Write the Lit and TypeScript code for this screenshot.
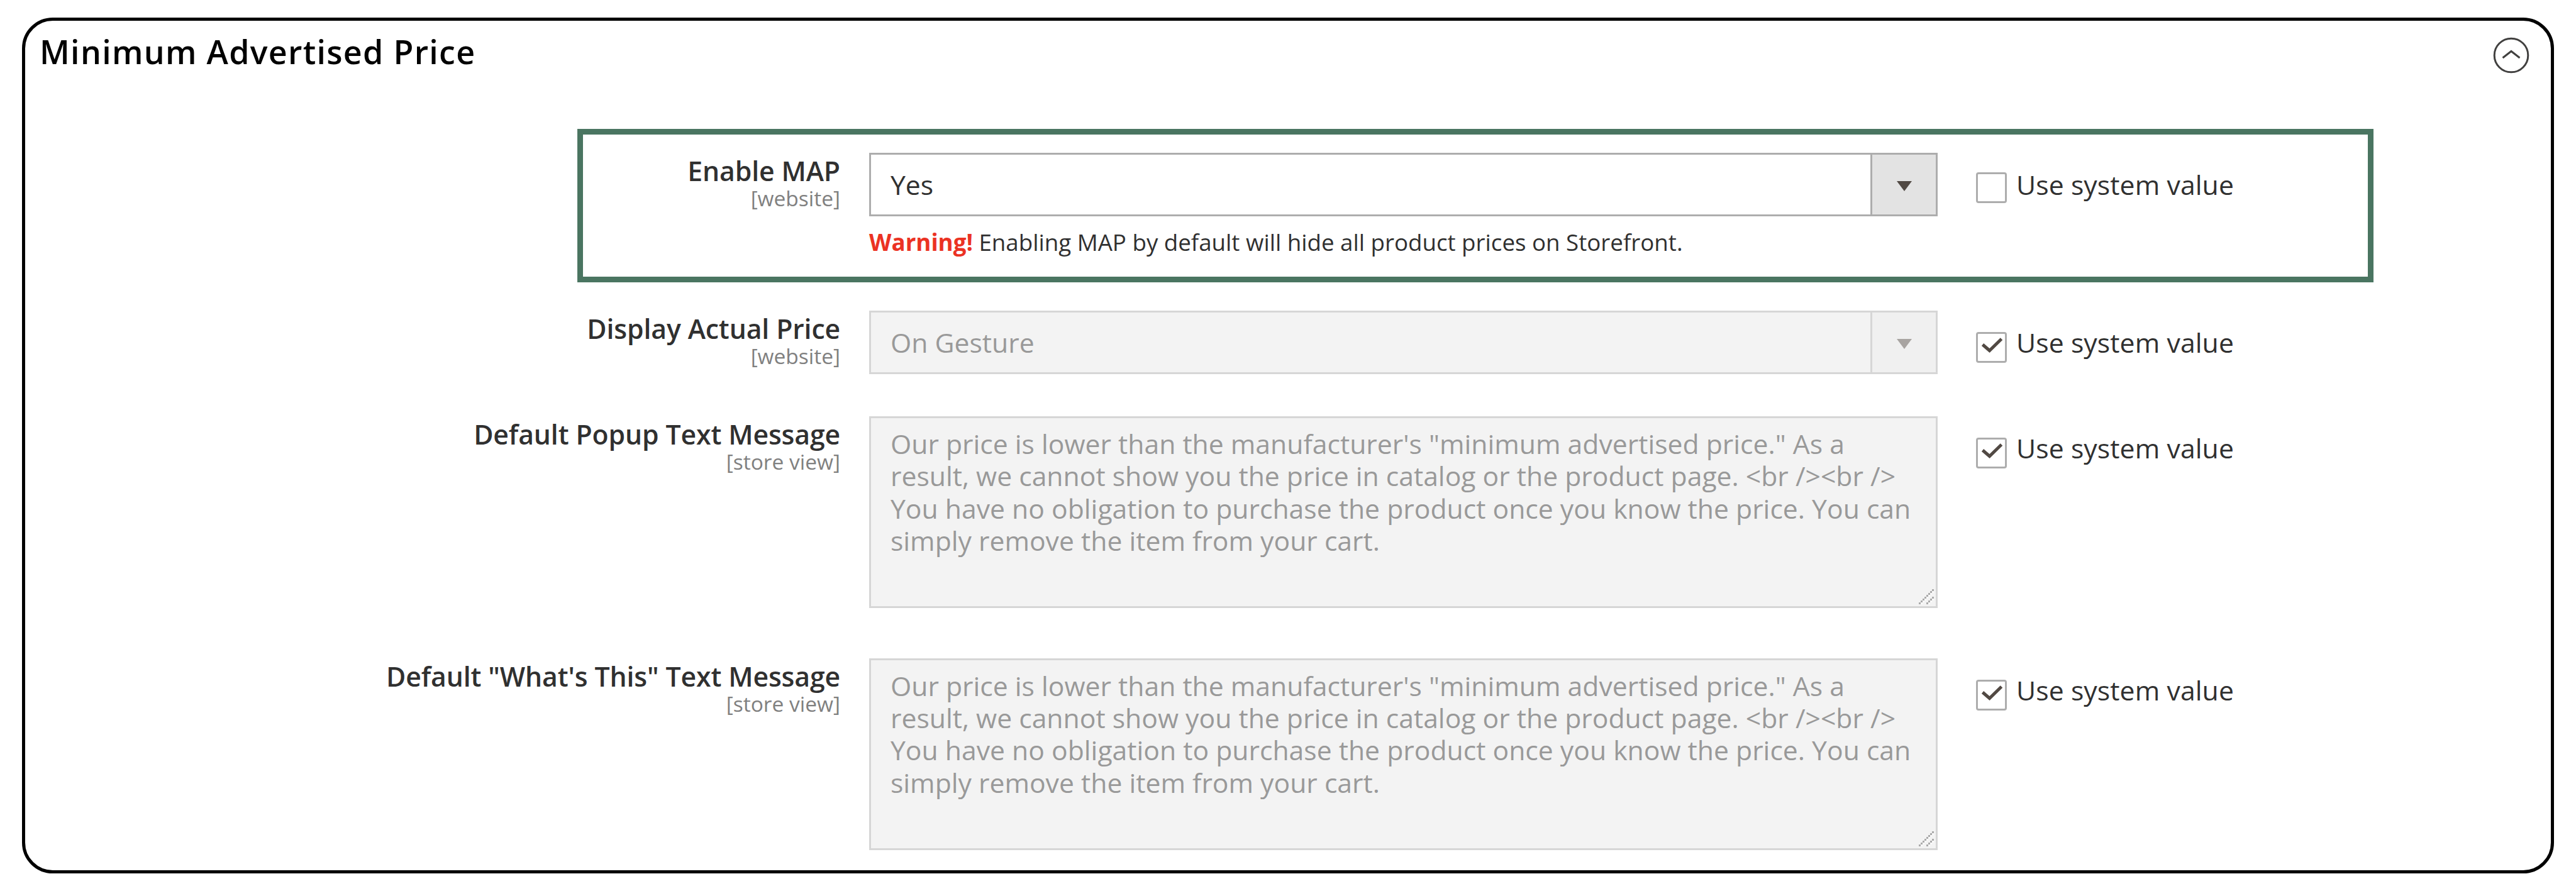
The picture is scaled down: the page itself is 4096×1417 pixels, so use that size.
import { LitElement, html, css, svg, nothing } from "lit";
import { customElement, property } from "lit/decorators.js";
import { classMap } from "lit/directives/class-map.js";

const MESSAGE = [
  `Our price is lower than the manufacturer's "minimum advertised price." As a`,
  `result, we cannot show you the price in catalog or the product page. <br /><br />`,
  `You have no obligation to purchase the product once you know the price. You can`,
  `simply remove the item from your cart.`,
];

// cells of the resize grip, on an 8x8 grid
const GRIP = [
  ...[0, 1, 2, 3, 4, 5, 6, 7].map((i) => [i, 7 - i]),
  ...[0, 1, 2, 3].map((i) => [i + 4, 7 - i]),
];

@customElement("system-value")
class SystemValue extends LitElement {
  static styles = css`
    :host {
      display: flex;
      align-items: flex-start;
      height: 101px;
    }

    .box {
      box-sizing: border-box;
      width: 49px;
      height: 49px;
      margin-top: 31px;
      border: 3px solid #adadad;
      border-radius: 4px;
      background: #fff;
    }

    .box.checked {
      margin-top: 34px;
    }

    .box svg {
      display: block;
      width: 43px;
      height: 43px;
    }

    .text {
      margin-left: 15px;
      line-height: 101px;
      letter-spacing: 0.1px;
      white-space: nowrap;
    }
  `;

  @property({ type: Boolean }) checked = false;

  render() {
    return html`
      <span class=${classMap({ box: true, checked: this.checked })}>
        ${this.checked
          ? html`<svg viewBox="0 0 43 43">
              <path d="M7.500 17L18.500 26.500L37.500 8" fill="none" stroke="#514943" stroke-width="5" />
            </svg>`
          : nothing}
      </span>
      <span class="text">Use system value</span>
    `;
  }
}

@customElement("select-box")
class SelectBox extends LitElement {
  static styles = css`
    :host {
      display: block;
    }

    .select {
      box-sizing: border-box;
      display: flex;
      height: 101px;
      border: 3px solid #adadad;
      background: #fff;
    }

    .value {
      flex: 1;
      padding-left: 31px;
      line-height: 95px;
    }

    .arrow {
      display: flex;
      align-items: center;
      justify-content: center;
      width: 101px;
      border-left: 3px solid #adadad;
      background: #e3e3e3;
      color: #514943;
    }

    .arrow svg {
      width: 24px;
      height: 16px;
      margin-top: 5px;
    }

    .disabled {
      border-color: #d6d6d6;
      background: #f3f3f3;
      color: #999;
    }

    .disabled .arrow {
      border-color: #d6d6d6;
      background: #f0f0f0;
      color: #a8a4a1;
    }
  `;

  @property() value = "";
  @property({ type: Boolean }) disabled = false;

  render() {
    return html`
      <div class=${classMap({ select: true, disabled: this.disabled })}>
        <span class="value">${this.value}</span>
        <span class="arrow">
          <svg viewBox="0 0 24 16"><path d="M0 0H24L12 16Z" fill="currentColor" /></svg>
        </span>
      </div>
    `;
  }
}

@customElement("message-area")
class MessageArea extends LitElement {
  static styles = css`
    .area {
      box-sizing: border-box;
      position: relative;
      height: 305px;
      padding: 15px 31px;
      border: 3px solid #d6d6d6;
      background: #f3f3f3;
      color: #999;
      line-height: 51.4px;
      white-space: pre;
    }

    .grip {
      position: absolute;
      right: 3px;
      bottom: 3px;
      width: 24px;
      height: 24px;
    }
  `;

  render() {
    return html`
      <div class="area">${MESSAGE.map((line) => html`<div>${line}</div>`)}<svg class="grip" viewBox="0 0 8 8">
          ${GRIP.map(([x, y]) => svg`
            <rect x=${x + 1} y=${y} width="1" height="1" fill="#fafafa" />
            <rect x=${x} y=${y} width="1" height="1" fill="#ababab" />
          `)}
        </svg></div>
    `;
  }
}

@customElement("config-row")
class ConfigRow extends LitElement {
  static styles = css`
    :host {
      display: grid;
      align-items: start;
    }

    .label {
      padding-right: 46px;
      text-align: right;
      white-space: nowrap;
    }

    .name {
      line-height: 58px;
      font-weight: 600;
      letter-spacing: -0.1px;
    }

    .scope {
      font-size: 33.5px;
      line-height: 28.4px;
      color: #808080;
    }
  `;

  @property() name = "";
  @property() scope = "";

  render() {
    return html`
      <div class="label">
        <div class="name">${this.name}</div>
        <div class="scope">${this.scope}</div>
      </div>
      <slot></slot>
    `;
  }
}

@customElement("app-root")
class AppRoot extends LitElement {
  static styles = css`
    :host {
      display: block;
      box-sizing: border-box;
      width: 4096px;
      height: 1417px;
      padding: 28px 35px;
      background: #fff;
      color: #303030;
      font-family: "Open Sans", "Noto Sans", sans-serif;
      font-size: 42.7px;
    }

    .panel {
      box-sizing: border-box;
      height: 1361px;
      border: 5px solid #000;
      border-radius: 49px;
    }

    .header {
      display: flex;
      justify-content: space-between;
      box-sizing: border-box;
      height: 172px;
      padding: 13px 34px 0 23px;
    }

    .title {
      margin: 0;
      font-size: 51.9px;
      font-weight: 600;
      line-height: 73px;
      letter-spacing: 1.3px;
      color: #000;
    }

    .toggle {
      width: 58px;
      height: 58px;
      margin-top: 13px;
    }

    .highlight {
      box-sizing: border-box;
      width: 2856px;
      height: 244px;
      margin-left: 878px;
      padding-top: 29px;
      border: 9px solid #4a7561;
    }

    .row {
      grid-template-columns: 1342px 1699px auto;
      justify-content: start;
    }

    .highlight .row {
      grid-template-columns: 455px 1699px auto;
    }

    .check {
      margin-left: 61px;
    }

    .note {
      font-size: 36.7px;
      line-height: 82px;
      white-space: nowrap;
    }

    .note b {
      font-weight: 700;
      color: #eb3223;
    }

    .price {
      height: 168px;
      margin-top: 45px;
    }

    .popup {
      height: 384.5px;
    }
  `;

  render() {
    return html`
      <section class="panel">
        <header class="header">
          <h2 class="title">Minimum Advertised Price</h2>
          <svg class="toggle" viewBox="0 0 58 58" fill="none" stroke="#41403f" stroke-width="3">
            <circle cx="29" cy="29" r="26.8" />
            <path d="M15.500 33L29 22.500L42.500 33" />
          </svg>
        </header>
        <div class="highlight">
          <config-row class="row" name="Enable MAP" scope="[website]">
            <div>
              <select-box value="Yes"></select-box>
              <div class="note"><b>Warning!</b> Enabling MAP by default will hide all product prices on Storefront.</div>
            </div>
            <system-value class="check"></system-value>
          </config-row>
        </div>
        <config-row class="row price" name="Display Actual Price" scope="[website]">
          <select-box value="On Gesture" disabled></select-box>
          <system-value class="check" checked></system-value>
        </config-row>
        <config-row class="row popup" name="Default Popup Text Message" scope="[store view]">
          <message-area></message-area>
          <system-value class="check" checked></system-value>
        </config-row>
        <config-row class="row" name=${`Default "What's This" Text Message`} scope="[store view]">
          <message-area></message-area>
          <system-value class="check" checked></system-value>
        </config-row>
      </section>
    `;
  }
}
